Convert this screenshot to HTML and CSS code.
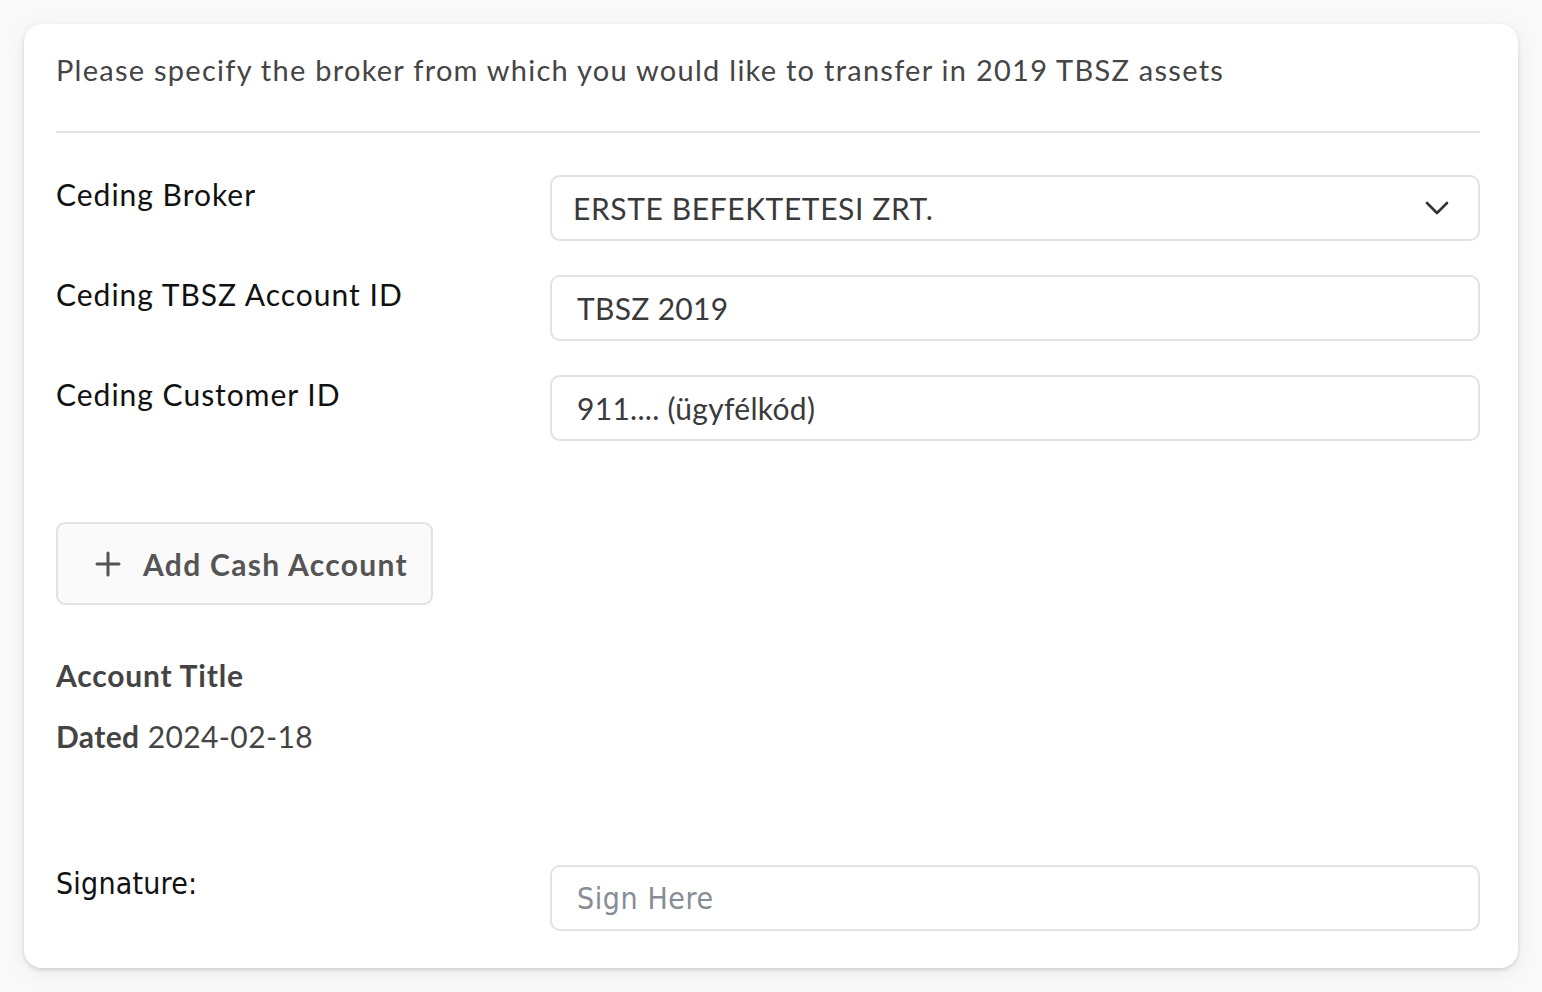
FILE: index.html
```html
<!DOCTYPE html>
<html lang="en">
<head>
<meta charset="utf-8">
<title>TBSZ transfer</title>
<link rel="stylesheet" href="styles.css">
</head>
<body>
<main class="card">
  <p class="intro">Please specify the broker from which you would like to transfer in 2019 TBSZ assets</p>
  <hr class="divider">
  <div class="fields">
    <label class="label">Ceding Broker</label>
    <div class="select">
      <span class="select-value">ERSTE BEFEKTETESI ZRT.</span>
      <svg class="chevron" width="24" height="14" viewBox="0 0 24 14"><polyline points="2,2 12,12 22,2" fill="none" stroke="#333" stroke-width="2.6" stroke-linecap="round" stroke-linejoin="round"/></svg>
    </div>
    <label class="label">Ceding TBSZ Account ID</label>
    <input class="input" type="text" value="TBSZ 2019" readonly>
    <label class="label">Ceding Customer ID</label>
    <input class="input" type="text" value="911.... (ügyfélkód)" readonly>
  </div>

  <button class="add-btn" type="button">
    <svg class="plus" width="26" height="26" viewBox="0 0 26 26"><path d="M13 2v22M2 13h22" stroke="#555" stroke-width="3" stroke-linecap="round"/></svg>
    <span>Add Cash Account</span>
  </button>

  <p class="title">Account Title</p>
  <p class="dated"><b>Dated</b> 2024-02-18</p>

  <div class="fields sign-row">
    <label class="label sig-label">Signature:</label>
    <input class="input sig-input" type="text" placeholder="Sign Here">
  </div>
</main>
</body>
</html>
```
FILE: styles.css
```css
* { box-sizing: border-box; }
html, body { margin: 0; }
body {
  background: #f9f9f9;
  padding: 24px;
  font-family: Lato, "Open Sans", sans-serif;
}
.card {
  height: 944px;
  background: #fff;
  border-radius: 18px;
  box-shadow: 0 2px 4px rgba(0,0,0,0.14), 0 4px 22px rgba(0,0,0,0.06);
  padding: 28px 38px 37px 32px;
}
.intro {
  margin: 0;
  font-size: 29px;
  line-height: 36px;
  letter-spacing: 1.26px;
  color: #454545;
}
.divider {
  margin: 43px 0 0;
  border: 0;
  height: 2px;
  background: #e2e2e2;
}
.fields {
  display: grid;
  grid-template-columns: 494px 1fr;
  row-gap: 34px;
  margin-top: 42px;
}
.label {
  padding-top: 1px;
  font-size: 30px;
  line-height: 36px;
  letter-spacing: 1px;
  color: #111;
}
.select, .input {
  height: 66px;
  border: 2px solid #e2e2e2;
  border-radius: 10px;
  background: #fff;
}
.select {
  display: flex;
  align-items: center;
  justify-content: space-between;
  padding: 0 29px 0 21px;
}
.select-value, .input {
  font-family: Lato, "Open Sans", sans-serif;
  font-size: 30px;
  color: #3a3a3a;
}
.select-value { letter-spacing: 0.6px; }
.input {
  width: 100%;
  padding: 0 25px;
  outline: none;
  letter-spacing: 0.3px;
}
.add-btn {
  margin-top: 81px;
  height: 83px;
  display: flex;
  align-items: center;
  gap: 22px;
  padding: 0 23px 0 37px;
  background: #fafafa;
  border: 2px solid #e2e2e2;
  border-radius: 9px;
  font-family: Lato, "Open Sans", sans-serif;
  font-weight: 700;
  font-size: 30px;
  letter-spacing: 1.3px;
  color: #555;
}
.plus { display: block; }
.title, .dated {
  margin: 0;
  font-size: 30px;
  line-height: 36px;
  color: #444;
}
.title { margin-top: 52px; font-weight: 700; letter-spacing: 0.8px; }
.dated { margin-top: 25px; letter-spacing: 0.4px; }
.dated b { font-weight: 700; }
.sign-row { margin-top: 111px; }
.sig-label {
  font-family: "DejaVu Sans Condensed", sans-serif;
  letter-spacing: 0.2px;
  color: #111;
}
.sig-input {
  font-family: "DejaVu Sans Condensed", sans-serif;
  letter-spacing: 0.6px;
}
.sig-input::placeholder { color: #878d94; }
```
